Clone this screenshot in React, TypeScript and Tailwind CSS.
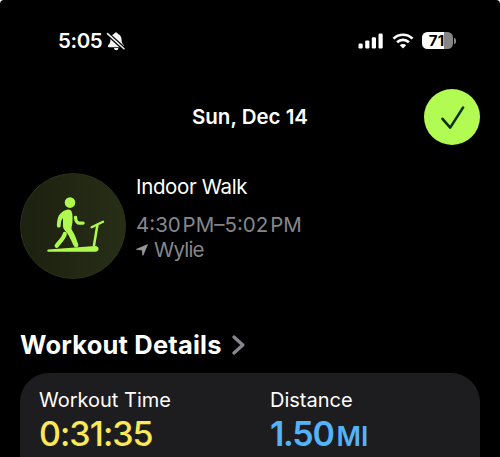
import React from "react";

function BellOff() {
  return (
    <svg width="20" height="20" viewBox="0 0 20 20" className="ml-[4px]">
      <path d="M8 17h4.400a2.200 2.200 0 0 1-4.400 0z" fill="#f5f5f5" />
      <path d="M10 1.600c-1.100 0-1.700.6-1.900 1.400C5.600 3.800 4.500 5.900 4.400 9c-.1 2.800-.7 3.800-2.100 5.100-.8.900-.4 2.100.5 2.100h14.400c.9 0 1.300-1.200.5-2.100-1.400-1.300-2-2.300-2.100-5.100-.1-3.100-1.200-5.200-3.700-6-.2-.8-.8-1.400-1.900-1.400z" fill="#f5f5f5" />
      <path d="M1.200 2.400 18 17.800" stroke="#000" strokeWidth="4" />
      <path d="M1.500 2.600 18 17.800" stroke="#f5f5f5" strokeWidth="1.500" strokeLinecap="round" />
    </svg>
  );
}

function Signal() {
  return (
    <svg width="26" height="16" viewBox="0 0 26 16" fill="#fff">
      <rect x="0.500" y="10.500" width="4.200" height="5" rx="1.200" />
      <rect x="7.200" y="7.500" width="4.200" height="8" rx="1.200" />
      <rect x="13.800" y="4.200" width="4.200" height="11.300" rx="1.200" />
      <rect x="20.500" y="0.500" width="4.200" height="15" rx="1.200" />
    </svg>
  );
}

function Wifi() {
  return (
    <svg width="22" height="16" viewBox="0 0 22 16" fill="none" stroke="#fff" strokeWidth="2.700">
      <path d="M1.500 5.600a13.600 13.600 0 0 1 19 0" />
      <path d="M5.100 9.200a8.500 8.500 0 0 1 11.800 0" />
      <path d="M11 15.400 7.800 12.200a4.600 4.600 0 0 1 6.400 0z" fill="#fff" stroke="none" />
    </svg>
  );
}

function Battery() {
  return (
    <div className="flex items-center">
      <div className="flex h-[17px] w-[31px] items-center justify-center rounded-[5.500px] bg-[linear-gradient(90deg,#fff_71%,#858585_71%)] pr-[2px] text-[15px] leading-none font-bold tracking-[0.2px] text-black">
        71
      </div>
      <div className="ml-[1px] h-[6px] w-[2px] rounded-r-full bg-[#858585]" />
    </div>
  );
}

function Treadmill() {
  return (
    <svg width="106" height="106" viewBox="0 0 106 106" fill="none" stroke="#b0fa50" strokeLinecap="round" strokeLinejoin="round">
      <circle cx="50" cy="29.600" r="5.300" fill="#b0fa50" stroke="none" />
      <path d="M48.300 36.600c-3.400 0-8.600 3.600-10.200 7.800-.8 2-1.200 6.100-1.200 8.300 0 2.400 3.700 2.500 3.800.1.100-3 .3-5.900 2.300-7.900v8.200c0 3.100 1.900 4.300 3.700 6.300 2.300 2.600 4.700 8.600 7.200 13.700 1.400 2.700 5.400 1.100 4.300-1.900-1.600-4.300-3.300-9.500-5.700-13.100-1.400-2.100-1.200-3.100-.6-5.400.7-3 .8-7.500.5-11-.3-3.300-1.700-5.100-4.100-5.100z" fill="#b0fa50" stroke="none" />
      <path d="M55.500 44.500c.4 3.800 1.100 5.600 4.300 5.600h3.300" strokeWidth="3.300" />
      <path d="M44.800 60.800c-.7 3.700-4.500 7.400-8.100 12" strokeWidth="4.200" />
      <path d="M71.600 54.200 83 48.800" strokeWidth="2.300" />
      <path d="M77.400 52 74 72.300" strokeWidth="2.500" />
      <path d="M28.300 76.500 75 73c4.700-.2 4.800 5.700.2 5.700H28.300c-1.500 0-1.500-2.100 0-2.200z" fill="#b0fa50" stroke="none" />
    </svg>
  );
}

export default function App() {
  return (
    <div className="h-[457px] w-[500px] overflow-hidden bg-white font-['Inter',sans-serif] text-white">
      <div className="flex h-full flex-col rounded-t-[4px] bg-black px-5">
        <div className="flex h-[81px] shrink-0 items-center justify-between pr-[24px] pl-[38px]">
          <div className="flex items-center">
            <span className="pt-px text-[20.500px] font-semibold tracking-[-0.400px]">5:05</span>
            <BellOff />
          </div>
          <div className="flex items-center gap-[8px]">
            <Signal />
            <Wifi />
            <Battery />
          </div>
        </div>

        <header className="grid h-[72px] shrink-0 grid-cols-[56px_1fr_56px] items-center">
          <h1 className="col-start-2 text-center text-[20.500px] font-semibold">Sun, Dec 14</h1>
          <button className="flex size-[56px] items-center justify-center rounded-full bg-[#b2fb52]" aria-label="Done">
            <svg width="24" height="26" viewBox="0 0 24 26" className="ml-px" fill="none" stroke="#103016" strokeWidth="2.600" strokeLinecap="round" strokeLinejoin="round">
              <path d="M1.500 14.800 9.200 23.600 22 3.600" />
            </svg>
          </button>
        </header>

        <section className="mt-[20px] flex h-[106px] shrink-0">
          <div className="size-[106px] shrink-0 rounded-full border border-[#2b3018] bg-[linear-gradient(90deg,#1c2110,#272e16)]">
            <div className="-m-px">
              <Treadmill />
            </div>
          </div>
          <div className="ml-[10px] pt-[1px] text-[20.500px] leading-[25px]">
            <p className="tracking-[-0.350px]">Indoor Walk</p>
            <p className="mt-[13px] whitespace-nowrap text-[#87878a]">4:30&#8202;PM–5:02&#8202;PM</p>
            <p className="flex items-center tracking-[-0.800px] text-[#87878a]">
              <svg width="12" height="12" viewBox="0 0 11 11" className="mr-[6px]">
                <path d="M10.500.600 6.300 10.400 5.700 5.400.500 4.900z" fill="#98989c" stroke="#98989c" strokeWidth=".8" strokeLinejoin="round" />
              </svg>
              Wylie
            </p>
          </div>
        </section>

        <div className="mt-[50px] flex h-[32px] shrink-0 items-center">
          <h2 className="pt-px text-[25.500px] font-bold tracking-[0.200px]">Workout Details</h2>
          <svg width="14" height="20" viewBox="0 0 14 20" className="ml-[10px]" fill="none" stroke="#87878b" strokeWidth="3.300" strokeLinecap="round" strokeLinejoin="round">
            <path d="m2 2 8.800 8L2 18" />
          </svg>
        </div>

        <section className="mt-[12px] grid h-[96px] shrink-0 grid-cols-[231px_1fr] rounded-t-[29px] bg-[#1d1d1f] px-[19px] pt-[14px]">
          <div>
            <p className="text-[20px] leading-[26px]">Workout Time</p>
            <p className="text-[34px] leading-[42px] font-medium tracking-[-0.950px] text-[#fbe957]">0:31:35</p>
          </div>
          <div>
            <p className="text-[20px] leading-[26px]">Distance</p>
            <p className="text-[34px] leading-[42px] font-semibold tracking-[-1.300px] text-[#55b3f9]">
              1.50<span className="ml-[3px] text-[26.500px] tracking-[0px]">MI</span>
            </p>
          </div>
        </section>
      </div>
    </div>
  );
}
